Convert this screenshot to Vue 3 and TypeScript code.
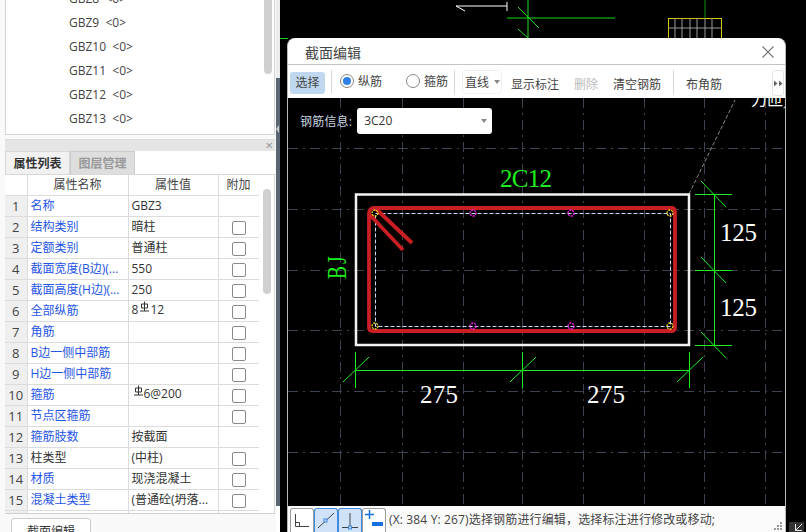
<script setup lang="ts">
interface Row { n: number; name: string; val: string; blue: boolean; box: boolean; bar?: boolean }
const trees = ['GBZ8', 'GBZ9', 'GBZ10', 'GBZ11', 'GBZ12', 'GBZ13']
const rows: Row[] = [
  { n: 1, name: '名称', val: 'GBZ3', blue: true, box: false },
  { n: 2, name: '结构类别', val: '暗柱', blue: true, box: true },
  { n: 3, name: '定额类别', val: '普通柱', blue: true, box: true },
  { n: 4, name: '截面宽度(B边)(...', val: '550', blue: true, box: true },
  { n: 5, name: '截面高度(H边)(...', val: '250', blue: true, box: true },
  { n: 6, name: '全部纵筋', val: '8|12', blue: true, box: true, bar: true },
  { n: 7, name: '角筋', val: '', blue: true, box: true },
  { n: 8, name: 'B边一侧中部筋', val: '', blue: true, box: true },
  { n: 9, name: 'H边一侧中部筋', val: '', blue: true, box: true },
  { n: 10, name: '箍筋', val: '|6@200', blue: true, box: true, bar: true },
  { n: 11, name: '节点区箍筋', val: '', blue: true, box: true },
  { n: 12, name: '箍筋肢数', val: '按截面', blue: true, box: false },
  { n: 13, name: '柱类型', val: '(中柱)', blue: false, box: true },
  { n: 14, name: '材质', val: '现浇混凝土', blue: true, box: true },
  { n: 15, name: '混凝土类型', val: '(普通砼(坍落...', blue: true, box: true },
  { n: 16, name: '', val: '', blue: false, box: true },
]
const vGrid = [340, 402, 463, 522, 583, 644, 704, 765]
const hGrid = [148, 209, 270, 330, 391, 452]
const magenta = [[473, 213], [571, 213], [473, 326], [571, 326]]
const yellow = [[375, 213], [670, 213], [375, 326], [670, 326]]
const hTicks = [194, 270, 345]
const vTicks = [355, 522, 689]
</script>

<template>
  <div class="desk">
    <aside class="left">
      <div class="tree">
        <div v-for="t in trees" :key="t" class="tree-item">{{ t }}&nbsp; &lt;0&gt;</div>
        <div class="tree-thumb"></div>
      </div>
      <div class="panel-head"><span class="panel-x">✕</span></div>
      <div class="tabs">
        <div class="tab on">属性列表</div>
        <div class="tab">图层管理</div>
      </div>
      <div class="table-wrap">
        <table class="props">
          <colgroup>
            <col class="c0" /><col class="c1" /><col class="c2" /><col class="c3" />
          </colgroup>
          <thead>
            <tr><th></th><th>属性名称</th><th>属性值</th><th>附加</th></tr>
          </thead>
          <tbody>
            <tr v-for="r in rows" :key="r.n">
              <td class="num">{{ r.n }}</td>
              <td :class="{ blue: r.blue }">{{ r.name }}</td>
              <td class="val">
                <div v-if="r.bar" class="bar-val">
                  <span v-if="r.val.split('|')[0]">{{ r.val.split('|')[0] }}</span>
                  <svg class="rebar" width="11" height="12" viewBox="0 0 11 12">
                    <path d="M2.500 3h6v4h-6zM5.500 .5v9.500M1 10h9" fill="none" stroke="#333" stroke-width="1" />
                  </svg>
                  <span>{{ r.val.split('|')[1] }}</span>
                </div>
                <template v-else>{{ r.val }}</template>
              </td>
              <td class="chk"><span v-if="r.box" class="box"></span></td>
            </tr>
          </tbody>
        </table>
        <div class="table-track"><div class="table-thumb"></div></div>
      </div>
      <div class="foot"><button class="edit-btn">截面编辑</button></div>
    </aside>

    <div class="splitter"><span class="splitter-arrow"></span></div>

    <main class="cad">
      <svg class="back" width="526" height="532" viewBox="280 0 526 532">
        <path d="M456 6H507M507 2V11M456 6L465 11" stroke="#fff" fill="none" />
        <path d="M507 18H615" stroke="#0a8f0a" stroke-width="1.500" />
        <path d="M528 0V38M518 7L539 28M518 29L528 38" stroke="#22e022" fill="none" />
        <path d="M705 0V18" stroke="#0a8f0a" />
        <rect x="668.500" y="18.500" width="53" height="22" fill="none" stroke="#d8c800" />
        <path d="M675 18V38M682 18V38M690 18V38M697 18V38M705 18V38M712 18V38M668 28H722" stroke="#9a9a9a" />
        <path d="M280 38.500H288" stroke="#1ad01a" />
        <rect x="789" y="522" width="15" height="10" fill="#333" />
        <path d="M795.500 524V530.500H802M795.500 530.500L802 524" stroke="#eee" fill="none" />
      </svg>

      <section class="dialog">
        <header class="dlg-head">
          <span class="dlg-title">截面编辑</span>
          <svg class="dlg-x" width="12" height="12" viewBox="0 0 12 12">
            <path d="M.5.500l11 11M11.500.500l-11 11" stroke="#777" stroke-width="1.100" />
          </svg>
        </header>
        <div class="toolbar">
          <span class="tool sel">选择</span>
          <span class="sep s1"></span>
          <span class="radio on"></span>
          <span class="r-label r1">纵筋</span>
          <span class="radio r2"></span>
          <span class="r-label r3">箍筋</span>
          <span class="sep s2"></span>
          <span class="line-box"></span>
          <span class="t-line">直线</span>
          <span class="caret"></span>
          <span class="t-show">显示标注</span>
          <span class="t-del">删除</span>
          <span class="t-clear">清空钢筋</span>
          <span class="sep s3"></span>
          <span class="t-corner">布角筋</span>
          <span class="more">
            <svg width="9" height="7" viewBox="0 0 9 7"><path d="M0 .5L3.500 3.500L0 6.500ZM5 .5L8.500 3.500L5 6.500Z" fill="#666" /></svg>
          </span>
        </div>
        <div class="stage">
          <svg class="draw" width="497" height="408" viewBox="288 98 497 408">
            <g stroke="#3c4250" stroke-dasharray="10 5 2 5" fill="none">
              <path v-for="x in vGrid" :key="x" :d="`M${x + 0.5} 98V506`" />
              <path v-for="y in hGrid" :key="y" :d="`M288 ${y + 0.5}H785`" />
            </g>
            <path d="M689 194L735 100" stroke="#888" stroke-dasharray="4 2" />
            <text x="751" y="105" class="t-white small">力匝)</text>

            <rect x="356" y="194.500" width="333" height="150.500" fill="none" stroke="#f2f2f2" stroke-width="2.500" />
            <rect x="375.500" y="213.500" width="295" height="113" fill="none" stroke="#c8dcf5" stroke-dasharray="4 2" />
            <path d="M374 208H672a3 3 0 0 1 3 3V328a3 3 0 0 1-3 3H372a3 3 0 0 1-3-3V213a5 5 0 0 1 5-5ZM375 208L412 243M370 215L403 250" fill="none" stroke="#c81e24" stroke-width="3.800" />
            <circle v-for="p in magenta" :key="p[0] + '-' + p[1]" :cx="p[0]" :cy="p[1]" r="3" fill="none" stroke="#ff20ff" stroke-width="1.300" stroke-dasharray="2 1" />
            <circle v-for="p in yellow" :key="p[0] + '+' + p[1]" :cx="p[0]" :cy="p[1]" r="3" fill="none" stroke="#f8d820" stroke-width="1.300" stroke-dasharray="2 1" />

            <g stroke="#1cf01c" fill="none">
              <path d="M714.500 194V345" />
              <path v-for="y in hTicks" :key="y" :d="`M695 ${y + 0.5}H732M701 ${y - 13}L726 ${y + 13}`" />
              <path d="M355 370.500H689" />
              <path v-for="x in vTicks" :key="x" :d="`M${x + 0.5} 352V388M${x - 12} 382L${x + 14} 357`" />
            </g>

            <text x="500" y="187" class="t-green" textLength="52">2C12</text>
            <text transform="translate(346 279) rotate(-90) scale(.72 1)" class="t-green bj">BJ</text>
            <text x="720" y="241" class="t-white" textLength="37">125</text>
            <text x="720" y="316" class="t-white" textLength="37">125</text>
            <text x="420" y="403" class="t-white" textLength="38">275</text>
            <text x="587" y="403" class="t-white" textLength="38">275</text>
          </svg>
          <div class="rebar-info">
            <span class="info-label">钢筋信息:</span>
            <span class="select">3C20<i class="caret sel-caret"></i></span>
          </div>
        </div>
        <footer class="status">
          <span class="snap">
            <svg width="24" height="24" viewBox="0 0 24 24"><path d="M5.500 6V18.500H19M5 14.500H9.500V18" fill="none" stroke="#444" /></svg>
          </span>
          <span class="snap active">
            <svg width="24" height="24" viewBox="0 0 24 24"><path d="M4 20L20 5" stroke="#444" fill="none" /><rect x="10" y="11" width="3" height="3" fill="#bcd8f5" stroke="#3f8ae0" /></svg>
          </span>
          <span class="snap active">
            <svg width="24" height="24" viewBox="0 0 24 24"><path d="M4 19.500H20M12 5V19" stroke="#444" fill="none" /><rect x="10.500" y="18" width="3" height="3" fill="#bcd8f5" stroke="#3f8ae0" /></svg>
          </span>
          <span class="snap">
            <svg width="24" height="24" viewBox="0 0 24 24"><path d="M7.500 2V11M3 6.500H12" stroke="#1670e0" stroke-width="1.500" /><rect x="10" y="14" width="11" height="4" fill="#1670e0" /></svg>
          </span>
          <span class="status-text">(X: 384 Y: 267)选择钢筋进行编辑，选择标注进行修改或移动;</span>
          <svg class="grip" width="9" height="9" viewBox="0 0 9 9"><path d="M6 0h2v2H6zM3 3h2v2H3zM6 3h2v2H6zM0 6h2v2H0zM3 6h2v2H3zM6 6h2v2H6z" fill="#9a9a9a" /></svg>
        </footer>
      </section>
    </main>
  </div>
</template>

<style>
html, body { margin: 0; background: #000; overflow: hidden; }
</style>

<style scoped>
.desk {
  width: 806px; height: 532px; display: flex; overflow: hidden; background: #000;
  font-family: "Open Sans", "Noto Sans CJK SC", sans-serif; font-size: 12px; color: #333;
}
.left { width: 276px; height: 532px; background: #f9f9f9; flex: none; box-sizing: border-box; padding-left: 5px; display: flex; flex-direction: column; }
.tree {
  position: relative; width: 270px; height: 135px; background: #fff; box-sizing: border-box;
  border: 1px solid #d4d4d4; border-top: 0; flex: none; padding-left: 63px; overflow: hidden;
}
.tree-item { height: 24px; line-height: 24px; position: relative; top: -13px; color: #444; }
.tree-thumb { position: absolute; right: 2px; top: 0; width: 8px; height: 74px; background: #d0d0d0; border-radius: 0 0 4px 4px; }
.panel-head { height: 11px; margin-top: 4px; background: #e5e5e5; flex: none; display: flex; justify-content: flex-end; align-items: center; padding-right: 2px; width: 268px; border-top: 1px solid #dcdcdc; }
.panel-x { font-size: 10px; color: #999; line-height: 11px; }
.tabs { display: flex; height: 23px; flex: none; width: 270px; background: #fff; border-bottom: 1px solid #d8d8d8; box-sizing: content-box; }
.tab { width: 63px; height: 22px; line-height: 23px; text-align: center; background: #dedede; color: #999; font-weight: 700; border: 1px solid #ccc; border-bottom: 0; box-sizing: content-box; }
.tab.on { background: #f1f1f1; color: #333; border-color: #d8d8d8; }
.table-wrap { position: relative; width: 270px; height: 339px; overflow: hidden; background: #fff; border-bottom: 1px solid #d0d0d0; border-right: 1px solid #d8d8d8; box-sizing: border-box; flex: none; }
.props { border-collapse: collapse; table-layout: fixed; width: 254px; }
.c0 { width: 22px; } .c1 { width: 101px; } .c2 { width: 90px; } .c3 { width: 41px; }
.props th, .props td { height: 20px; padding: 0 0 0 3px; border: 1px solid #dcdcdc; font-weight: 400; white-space: nowrap; overflow: hidden; line-height: 18px; box-sizing: content-box; }
.props th { text-align: center; padding: 0; border-top: 0; color: #444; }
.props th:first-child, .props td:first-child { border-left: 0; }
.props td.num { background: #efefef; text-align: center; padding: 0; color: #444; font-size: 13px; }
.blue { color: #1f55e6; }
.val { color: #333; }
.bar-val { display: flex; height: 18px; align-items: flex-start; line-height: 18px; margin-top: -3px; }
.rebar { margin: 0 0 0 1px; flex: none; }
.props td.chk { text-align: center; padding: 0; }
.box { display: inline-block; width: 12px; height: 12px; border: 1px solid #8a8a8a; border-radius: 2px; vertical-align: middle; background: #fff; }
.table-track { position: absolute; right: 0; top: 0; width: 15px; height: 100%; background: #fff; }
.table-thumb { position: absolute; left: 4px; top: 14px; width: 8px; height: 105px; border-radius: 4px; background: #d0d0d0; }
.foot { padding: 4px 0 0 6px; }
.edit-btn { width: 80px; height: 26px; font: inherit; color: #333; background: #fff; border: 1px solid #ccc; border-radius: 3px; padding: 0; }

.splitter { position: relative; width: 4px; height: 532px; flex: none; background: linear-gradient(#ececec 78px, #5a6672 78px, #5a6672 506px, #fff 506px); }
.splitter-arrow { position: absolute; left: 0; top: 125px; border: 4px solid transparent; border-left: 0; border-right: 3px solid #c8c8c8; }

.cad { position: relative; flex: 1; height: 532px; background: #000; }
.back { position: absolute; left: 0; top: 0; }
.dialog { position: absolute; left: 7px; top: 38px; width: 499px; height: 494px; display: flex; flex-direction: column; background: #fff; border-radius: 8px 8px 0 0; box-sizing: border-box; border-right: 1px solid #bbb; border-left: 1px solid #bbb; }
.dlg-head { height: 27px; flex: none; display: flex; align-items: center; justify-content: space-between; padding: 1px 11px 0 17px; border-bottom: 1px solid #c4c4c4; box-sizing: border-box; border-radius: 8px 8px 0 0; }
.dlg-title { font-size: 14px; color: #444; }
.toolbar { height: 33px; flex: none; position: relative; background: #fff; color: #444; }
.toolbar > span { position: absolute; white-space: nowrap; }
.tool.sel { left: 2px; top: 7px; width: 35px; height: 22px; line-height: 22px; text-align: center; background: #c0d8ef; border-radius: 3px; }
.sep { top: 5px; width: 1px; height: 24px; background: #d8d8d8; }
.s1 { left: 43px; } .s2 { left: 166px; } .s3 { left: 385px; }
.radio { left: 52px; top: 9px; width: 12px; height: 12px; border: 1px solid #888; border-radius: 50%; background: #fff; }
.radio.on::after { content: ""; position: absolute; left: 2px; top: 2px; width: 8px; height: 8px; border-radius: 50%; background: #2f7fe8; }
.r2 { left: 118px; }
.r-label { top: 7px; }
.r1 { left: 70px; } .r3 { left: 136px; }
.line-box { left: 174px; top: 5px; width: 38px; height: 22px; border: 1px solid #f0f0f0; border-radius: 4px; }
.t-line { left: 177px; top: 8px; }
.caret { border: 3px solid transparent; border-top: 4px solid #888; border-bottom: 0; }
.toolbar > .caret { left: 206px; top: 15px; }
.t-show { left: 223px; top: 10px; } .t-del { left: 286px; top: 10px; color: #bbb; } .t-clear { left: 325px; top: 10px; } .t-corner { left: 398px; top: 10px; }
.more { left: 484px; top: 5px; width: 10px; height: 24px; display: flex; align-items: center; justify-content: center; border: 1px solid #e4e4e4; border-radius: 3px; }
.stage { position: relative; flex: 1; background: #000; }
.draw { position: absolute; left: 0; top: 0; }
.t-white, .t-green { font-family: "Liberation Serif", "Noto Sans CJK SC", serif; font-size: 25px; }
.t-white { fill: #fff; }
.t-white.small { font-size: 16px; }
.t-green { fill: #1cf01c; }
.t-green.bj { font-size: 27px; letter-spacing: 3px; }
.rebar-info { position: absolute; left: 12px; top: 10px; display: flex; align-items: center; gap: 5px; }
.info-label { color: #c8d4e0; font-size: 12px; letter-spacing: .2px; }
.select { position: relative; width: 135px; height: 26px; line-height: 26px; background: #fff; border-radius: 3px; box-sizing: border-box; padding-left: 7px; color: #333; }
.sel-caret { position: absolute; right: 5px; top: 11px; }
.status { height: 26px; flex: none; display: flex; align-items: flex-end; padding-left: 2px; background: #fafafa; color: #444; position: relative; }
.snap { width: 24px; height: 24px; box-sizing: border-box; border: 1px solid #9a9a9a; border-bottom: 0; border-radius: 3px 3px 0 0; background: #fff; display: flex; flex: none; }
.snap svg { margin: -1px 0 0 -1px; flex: none; }
.snap.active { background: #cfe2f7; border-color: #3f8ae0; }
.status-text { margin-left: 3px; height: 24px; line-height: 24px; white-space: nowrap; letter-spacing: .15px; }
.grip { position: absolute; right: 2px; bottom: 1px; }
</style>
